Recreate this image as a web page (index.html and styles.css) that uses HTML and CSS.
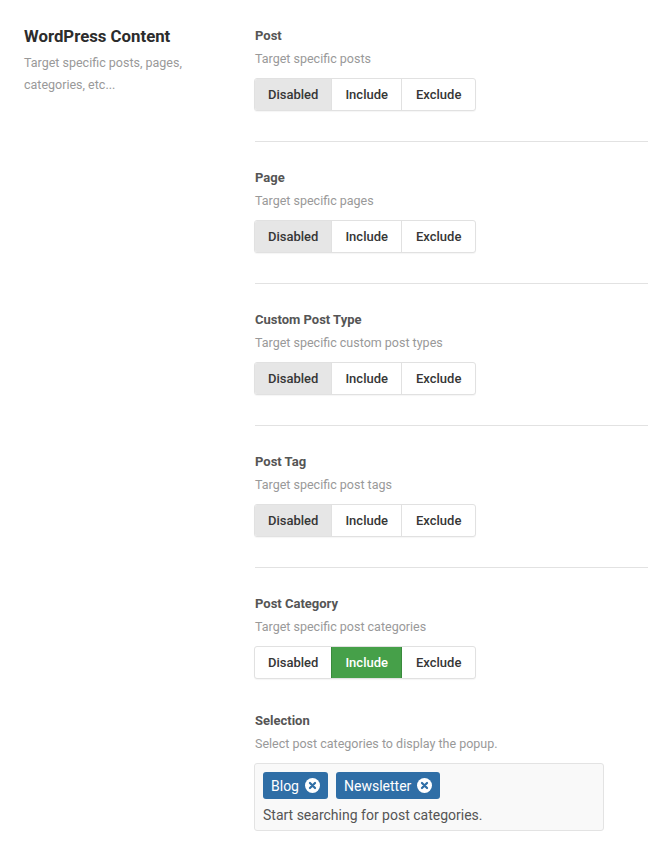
FILE: index.html
```html
<!DOCTYPE html>
<html>
<head>
<meta charset="utf-8">
<link rel="stylesheet" href="styles.css">
</head>
<body>
<div class="page">
  <div class="side">
    <h2 class="side-title">WordPress Content</h2>
    <p class="side-desc">Target specific posts, pages, categories, etc...</p>
  </div>
  <div class="main">
    <div class="section">
      <div class="label">Post</div>
      <div class="desc">Target specific posts</div>
      <div class="btn-group">
        <span class="btn active">Disabled</span><span class="btn">Include</span><span class="btn">Exclude</span>
      </div>
    </div>
    <div class="section">
      <div class="label">Page</div>
      <div class="desc">Target specific pages</div>
      <div class="btn-group">
        <span class="btn active">Disabled</span><span class="btn">Include</span><span class="btn">Exclude</span>
      </div>
    </div>
    <div class="section">
      <div class="label">Custom Post Type</div>
      <div class="desc">Target specific custom post types</div>
      <div class="btn-group">
        <span class="btn active">Disabled</span><span class="btn">Include</span><span class="btn">Exclude</span>
      </div>
    </div>
    <div class="section">
      <div class="label">Post Tag</div>
      <div class="desc">Target specific post tags</div>
      <div class="btn-group">
        <span class="btn active">Disabled</span><span class="btn">Include</span><span class="btn">Exclude</span>
      </div>
    </div>
    <div class="section last">
      <div class="label">Post Category</div>
      <div class="desc">Target specific post categories</div>
      <div class="btn-group">
        <span class="btn">Disabled</span><span class="btn include">Include</span><span class="btn">Exclude</span>
      </div>
      <div class="subfield">
        <div class="label">Selection</div>
        <div class="desc">Select post categories to display the popup.</div>
        <div class="select-box">
          <div class="tags">
            <span class="tag"><span class="tag-text">Blog</span><svg class="x" viewBox="0 0 16 16"><circle cx="8" cy="8" r="8" fill="#fff"/><path d="M5.3 5.3 L10.7 10.7 M10.7 5.3 L5.3 10.7" stroke="#2f6ea6" stroke-width="2.4" stroke-linecap="round"/></svg></span>
            <span class="tag"><span class="tag-text">Newsletter</span><svg class="x" viewBox="0 0 16 16"><circle cx="8" cy="8" r="8" fill="#fff"/><path d="M5.3 5.3 L10.7 10.7 M10.7 5.3 L5.3 10.7" stroke="#2f6ea6" stroke-width="2.4" stroke-linecap="round"/></svg></span>
          </div>
          <div class="placeholder">Start searching for post categories.</div>
        </div>
      </div>
    </div>
  </div>
</div>
</body>
</html>
```

FILE: styles.css
```css
html, body {
  margin: 0;
  padding: 0;
  background: #fff;
}
body {
  font-family: Roboto, "Liberation Sans", Arial, sans-serif;
  color: #333;
}
.page {
  display: flex;
  align-items: flex-start;
}
.side {
  width: 255px;
  flex: none;
  box-sizing: border-box;
  padding: 27px 0 0 24px;
}
.side-title {
  margin: 0;
  font-size: 16.8px;
  line-height: 19px;
  font-weight: 700;
  color: #2c2c2c;
}
.side-desc {
  margin: 6px 0 0;
  font-size: 12.5px;
  line-height: 22px;
  color: #999;
  width: 180px;
}
.main {
  flex: 1;
  min-width: 0;
}
.section {
  padding: 28px 0 30px;
  border-bottom: 1px solid #e2e2e2;
}
.section.last {
  border-bottom: none;
}
.label {
  font-size: 13px;
  line-height: 16px;
  font-weight: 700;
  color: #555;
}
.desc {
  margin-top: 7px;
  font-size: 12.5px;
  line-height: 16px;
  color: #999;
}
.btn-group {
  margin-top: 11px;
  margin-left: -1px;
  display: inline-flex;
  border: 1px solid #e1e1e1;
  border-radius: 3px;
  box-shadow: 0 1px 1px rgba(0,0,0,0.04);
  overflow: hidden;
  background: #fff;
}
.btn {
  display: block;
  height: 31px;
  line-height: 31px;
  padding: 0 13px;
  font-size: 13px;
  font-weight: 500;
  color: #363636;
  border-left: 1px solid #e1e1e1;
}
.btn:first-child {
  border-left: none;
}
.btn:last-child {
  padding: 0 14px;
}
.btn.active {
  background: #e6e6e6;
}
.btn.include {
  background: #46a049;
  color: #fff;
  border-left-color: #3a8a3d;
  border-right: 1px solid #3a8a3d;
}
.btn.include + .btn {
  border-left: none;
}
.subfield {
  margin-top: 34px;
}
.select-box {
  margin-top: 11px;
  margin-left: -1px;
  width: 350px;
  box-sizing: border-box;
  background: #f9f9f9;
  border: 1px solid #e3e3e3;
  border-radius: 3px;
  padding: 8px 8px 6px;
}
.tags {
  display: flex;
  gap: 8px;
}
.tag {
  display: inline-flex;
  align-items: center;
  gap: 6px;
  height: 27px;
  padding: 0 8px;
  background: #2f6ea6;
  color: #fff;
  font-size: 14px;
  border-radius: 3px;
}
.x {
  width: 15px;
  height: 15px;
}
.placeholder {
  margin-top: 7px;
  font-size: 14px;
  line-height: 18px;
  color: #555;
}
```
